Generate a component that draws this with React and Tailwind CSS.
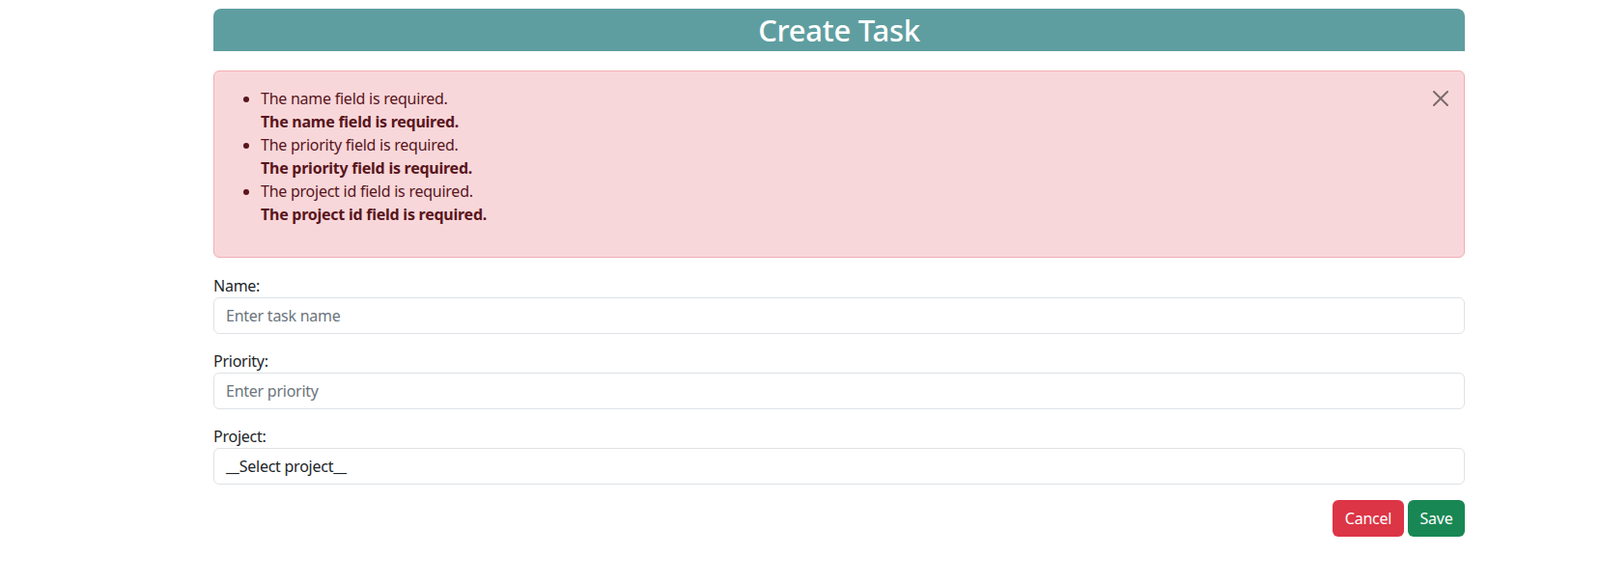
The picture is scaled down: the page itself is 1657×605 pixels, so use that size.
import React from "react";

const errors = [
  { msg: "The name field is required." },
  { msg: "The priority field is required." },
  { msg: "The project id field is required." },
];

const CloseIcon = () => (
  <svg width="16" height="16" viewBox="0 0 16 16" className="opacity-50">
    <path
      fill="#000"
      d="M.293.293a1 1 0 0 1 1.414 0L8 6.586 14.293.293a1 1 0 1 1 1.414 1.414L9.414 8l6.293 6.293a1 1 0 0 1-1.414 1.414L8 9.414l-6.293 6.293a1 1 0 0 1-1.414-1.414L6.586 8 .293 1.707a1 1 0 0 1 0-1.414z"
    />
  </svg>
);

const Field = ({ label, children }) => (
  <div className="mb-4">
    <label className="block leading-6">{label}</label>
    {children}
  </div>
);

export default function App() {
  return (
    <div
      className="min-h-[605px] bg-white text-[16px] tracking-[-0.25px] text-[#212529]"
      style={{ fontFamily: '"Noto Sans", sans-serif' }}
    >
      <div className="ml-[221px] w-[1296px] pt-[9px]">
        {/* Header */}
        <div className="h-[44px] bg-[#5f9ea0] rounded-t-lg flex items-center justify-center">
          <h1 className="text-white text-[31px] leading-none font-medium">Create Task</h1>
        </div>

        {/* Errors */}
        <div className="relative mt-5 mb-[17px] border border-[#f1aeb5] bg-[#f8d7da] text-[#58151c] rounded-md p-4 pr-12">
          <ul className="list-disc pl-8 mb-4 leading-6">
            {errors.map((e, i) => (
              <li key={i}>
                {e.msg}
                <br />
                <strong className="font-bold">{e.msg}</strong>
              </li>
            ))}
          </ul>
          <button className="absolute top-0 right-0 px-4 py-5 flex items-center justify-center">
            <CloseIcon />
          </button>
        </div>

        {/* Form */}
        <Field label="Name:">
          <input
            type="text"
            placeholder="Enter task name"
            className="block w-full h-[38px] px-3 border border-[#dee2e6] rounded-md placeholder:text-[#6c757d] outline-none"
          />
        </Field>
        <Field label="Priority:">
          <input
            type="text"
            placeholder="Enter priority"
            className="block w-full h-[38px] px-3 border border-[#dee2e6] rounded-md placeholder:text-[#6c757d] outline-none"
          />
        </Field>
        <Field label="Project:">
          <div className="w-full h-[38px] px-3 border border-[#dee2e6] rounded-md flex items-center">
            __Select project__
          </div>
        </Field>

        <div className="flex justify-end gap-1">
          <button className="h-[38px] w-[74px] rounded-md bg-[#dc3545] text-white">Cancel</button>
          <button className="h-[38px] w-[59px] rounded-md bg-[#198754] text-white">Save</button>
        </div>
      </div>
    </div>
  );
}
